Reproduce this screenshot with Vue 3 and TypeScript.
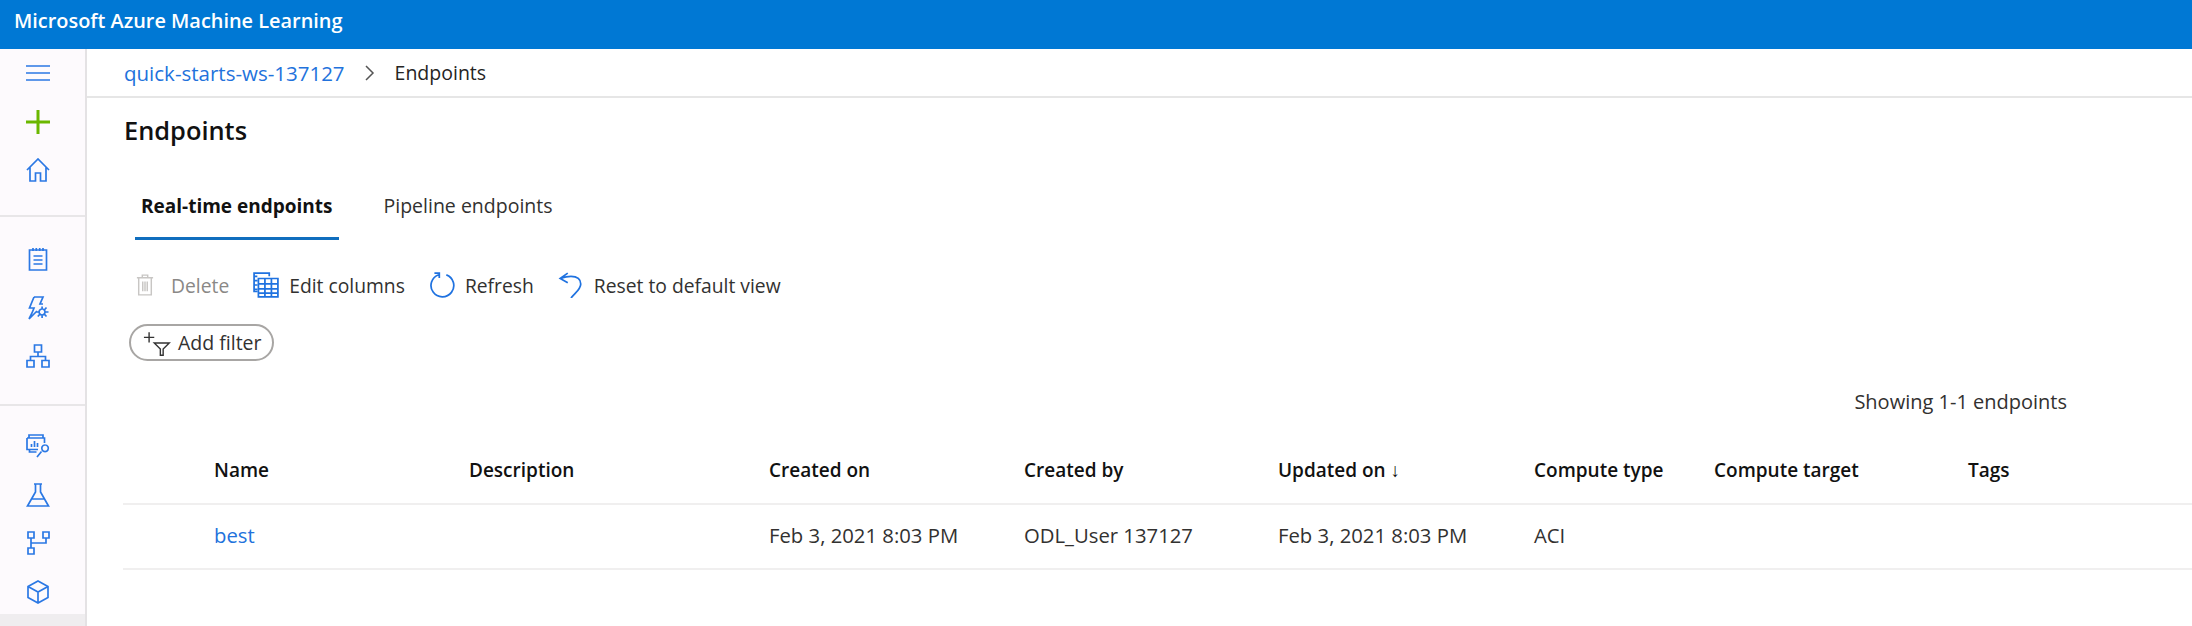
<template>
  <div class="page">
    <header class="topbar">Microsoft Azure Machine Learning</header>
    <div class="body">
      <nav class="sidebar">
        <div class="nav-group first">
          <div class="nav-item">
            <svg viewBox="0 0 24 24" class="icon"><path d="M0 5h24M0 12h24M0 19h24" /></svg>
          </div>
          <div class="nav-item">
            <svg viewBox="0 0 24 24" class="icon plus"><path d="M0 12h24M12 0v24" /></svg>
          </div>
          <div class="nav-item">
            <svg viewBox="0 0 24 24" class="icon"><path d="M1 12 12 1l11 11M4 9.500V23h5.500v-8h5v8H20V9.500" /></svg>
          </div>
        </div>
        <div class="nav-group">
          <div class="nav-item">
            <svg viewBox="0 0 24 24" class="icon"><path d="M3.500 3h17v20h-17zM7 1v3M10.300 1v3M13.700 1v3M17 1v3M7.500 9h9M7.500 13h9M7.500 17h9" /></svg>
          </div>
          <div class="nav-item">
            <svg viewBox="0 0 24 24" class="icon"><path d="M8 1h9l-3 7h3M8 1 3.500 12H8l-2 5-3 6 8-8M16 13a3 3 0 1 0 .1 0M16.100 10.500v2.500M16.100 19v3M22.500 16h-3.400M13 16h-2.500M20.500 11.500 18.300 14M20.500 20.500 18.300 18M11.800 20.500 14 18" /></svg>
          </div>
          <div class="nav-item">
            <svg viewBox="0 0 24 24" class="icon"><path d="M8.500 1h7v7h-7zM1 16.500h7V23H1zM16 16.500h7V23h-7zM12 8v4.500M4.500 16.500v-4h15v4" /></svg>
          </div>
        </div>
        <div class="nav-group last">
          <div class="nav-item">
            <svg viewBox="0 0 24 24" class="icon"><path d="M3 4V1h14v3M1 4h17.500v5M1 4v11.500h11M3.500 15.500V18h7M5.500 13V10M8.500 13V7M11.500 13V9M19 11a3.300 3.300 0 1 0 .1 0M15.500 17.500 11 23" /></svg>
          </div>
          <div class="nav-item">
            <svg viewBox="0 0 24 24" class="icon"><path d="M8 1h8M9.500 1v8L1.500 23h21l-8-14V1M6 16h12M1 23h22" /></svg>
          </div>
          <div class="nav-item">
            <svg viewBox="0 0 24 24" class="icon"><path d="M2 1h6v6H2zM17 1h6v6h-6zM2 17h6v6H2zM5 7v10M5 12h15V7" /></svg>
          </div>
          <div class="nav-item">
            <svg viewBox="0 0 24 24" class="icon"><path d="M12 1 22 6.500v11L12 23 2 17.500v-11zM2 6.500 12 12l10-5.500M12 12v11" /></svg>
          </div>
          <div class="nav-selected"></div>
        </div>
      </nav>
      <main class="main">
        <div class="crumbs">
          <span class="link ids">quick-starts-ws-137127</span>
          <svg viewBox="0 0 10 16" class="chevron"><path d="M1 1l7 7-7 7" /></svg>
          <span>Endpoints</span>
        </div>
        <div class="content">
          <h1 class="title">Endpoints</h1>
          <div class="tabs">
            <div class="tab active">Real-time endpoints</div>
            <div class="tab">Pipeline endpoints</div>
          </div>
          <div class="toolbar">
            <div class="tool disabled">
              <svg viewBox="0 0 20 24" class="tool-icon trash"><path d="M1 4h18M7 4V1h6v3M3 4v19h14V4M7.500 8v11M10 8v11M12.500 8v11" /></svg>
              <span>Delete</span>
            </div>
            <div class="tool">
              <svg viewBox="0 0 24 24" class="tool-icon"><path d="M1 4V1h14v3M1 4h3M1 8h3M1 12h3M1 16h3M1 4v14h3M5 6h18v17H5zM5 11h18M5 15.500h18M5 19.500h18M11 6v17M17 6v17" /></svg>
              <span>Edit columns</span>
            </div>
            <div class="tool">
              <svg viewBox="0 0 24 24" class="tool-icon"><path d="M9 2.500A10.500 10.500 0 1 0 16 2.600M5 1h4.500v4.500" /></svg>
              <span>Refresh</span>
            </div>
            <div class="tool">
              <svg viewBox="0 0 24 24" class="tool-icon"><path d="M9 1 2 6l7 4M2 6c3-1 6-2 10-2 6 0 9 3 9 7 0 5-5 8-9 13" /></svg>
              <span>Reset to default view</span>
            </div>
          </div>
          <button class="filter">
            <svg viewBox="0 0 32 26" class="filter-icon"><path d="M1 7h11M6.500 1.500v11M12 13h16l-6.500 6.500V26h-3v-6.500z" /></svg>
            <span>Add filter</span>
          </button>
          <div class="count">Showing 1-1 endpoints</div>
          <div class="grid head">
            <div v-for="col in columns" :key="col">{{ col }}</div>
          </div>
          <div class="grid row">
            <div class="link">best</div>
            <div></div>
            <div>Feb 3, 2021 8:03 PM</div>
            <div>ODL_User 137127</div>
            <div>Feb 3, 2021 8:03 PM</div>
            <div>ACI</div>
            <div></div>
            <div></div>
          </div>
        </div>
      </main>
    </div>
  </div>
</template>

<script setup lang="ts">
const columns: string[] = [
  'Name',
  'Description',
  'Created on',
  'Created by',
  'Updated on ↓',
  'Compute type',
  'Compute target',
  'Tags'
]
</script>

<style>
html,
body {
  margin: 0;
  background: #fff;
}
</style>

<style scoped>
.page {
  width: 2192px;
  height: 626px;
  overflow: hidden;
  font-family: "Open Sans", "Noto Sans", sans-serif;
  font-size: 19.5px;
  color: #323130;
}

.topbar {
  height: 49px;
  box-sizing: border-box;
  padding-left: 14px;
  background: #0078d4;
  color: #fff;
  font-size: 19.9px;
  font-weight: 600;
  line-height: 42px;
}

.body {
  display: flex;
  height: 577px;
}

.sidebar {
  width: 85px;
  flex: none;
  display: flex;
  flex-direction: column;
  background: #fdfafd;
  border-right: 2px solid #e4e2e4;
}

.nav-group {
  padding-top: 18px;
  height: 189px;
  box-sizing: border-box;
  border-bottom: 2px solid #e8e6e8;
}

.nav-group.first {
  height: 168px;
  padding-top: 0;
}

.nav-group.last {
  flex: 1;
  padding-top: 16px;
  border-bottom: none;
}

.nav-item {
  height: 48.500px;
  display: flex;
  align-items: center;
  justify-content: center;
  padding-right: 9px;
}

.nav-selected {
  height: 14px;
  margin-top: -2px;
  background: #efedef;
}

.icon {
  width: 24px;
  height: 24px;
  fill: none;
  stroke: #2b78e4;
  stroke-width: 1.700;
}

.icon.plus {
  stroke: #6bb700;
  stroke-width: 3;
}

.main {
  flex: 1;
  min-width: 0;
}

.crumbs {
  height: 49px;
  box-sizing: border-box;
  display: flex;
  align-items: center;
  padding-left: 37px;
  gap: 20px;
  border-bottom: 2px solid #e6e6e6;
  color: #252423;
}

.link {
  color: #2272dc;
}

.ids {
  font-size: 20.500px;
}

.chevron {
  width: 10px;
  height: 16px;
  fill: none;
  stroke: #555;
  stroke-width: 1.500;
}

.content {
  padding-left: 36px;
}

.title {
  margin: 0;
  padding: 15px 0 0 1px;
  font-size: 25.400px;
  font-weight: 600;
  line-height: 34px;
  color: #111;
}

.tabs {
  display: flex;
  margin-top: 31px;
  gap: 39px;
  padding-left: 12px;
}

.tab {
  padding: 16px 6px 19px;
  line-height: 24px;
  border-bottom: 3px solid transparent;
}

.tab.active {
  font-size: 19px;
  font-weight: 700;
  color: #111;
  border-bottom-color: #106ebe;
}

.toolbar {
  display: flex;
  align-items: center;
  gap: 24px;
  height: 32px;
  margin-top: 29px;
  padding-left: 13px;
  font-size: 19.300px;
}

.tool {
  display: flex;
  align-items: center;
  gap: 10px;
}

.tool.disabled {
  gap: 17px;
  color: #8a8886;
}

.tool-icon {
  width: 26px;
  height: 26px;
  fill: none;
  stroke: #1f72e0;
  stroke-width: 1.600;
}

.tool-icon.trash {
  width: 18px;
  height: 24px;
  stroke: #c8c6c4;
}

.filter {
  display: flex;
  align-items: center;
  gap: 5px;
  height: 37px;
  width: 145px;
  box-sizing: border-box;
  margin: 23px 0 0 6px;
  padding: 0 12px;
  font: inherit;
  white-space: nowrap;
  color: inherit;
  background: #fff;
  border: 2px solid #a8a6a4;
  border-radius: 19px;
}

.filter-icon {
  width: 30px;
  height: 26px;
  flex: none;
  fill: none;
  stroke: #333;
  stroke-width: 1.500;
}

.count {
  padding-right: 125px;
  margin-top: 27px;
  text-align: right;
  line-height: 28px;
  font-size: 20px;
}

.grid {
  display: grid;
  grid-template-columns: 255px 300px 255px 254px 256px 180px 254px 1fr;
  align-items: center;
  padding-left: 91px;
  border-bottom: 2px solid #f0efef;
}

.head {
  height: 68px;
  margin-top: 21px;
  box-sizing: border-box;
  font-size: 19px;
  font-weight: 600;
  color: #111;
}

.row {
  height: 65px;
  box-sizing: border-box;
  padding-bottom: 4px;
  font-size: 20.300px;
}
</style>
